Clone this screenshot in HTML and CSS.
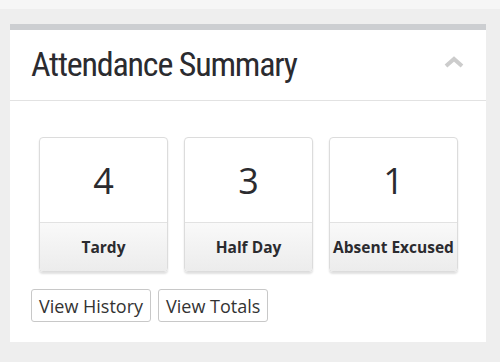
FILE: index.html
```html
<!DOCTYPE html>
<html lang="en">
<head>
    <meta charset="UTF-8">
    <meta name="viewport" content="width=device-width, initial-scale=1.0">
    <title>Attendance Summary</title>
    <link rel="stylesheet" href="styles.css">
</head>
<body>
    <div class="topbar"></div>
    <div class="page">
        <div class="panel">
            <div class="panel-header">
                <h2 class="panel-title">Attendance Summary</h2>
                <button class="collapse" aria-label="Collapse">
                    <svg width="20" height="12" viewBox="0 0 20 12">
                        <path d="M2 10 L10 3 L18 10" fill="none" stroke="#cccccc" stroke-width="4"/>
                    </svg>
                </button>
            </div>
            <div class="panel-body">
                <div class="stats">
                    <div class="stat">
                        <div class="stat-value">4</div>
                        <div class="stat-label">Tardy</div>
                    </div>
                    <div class="stat">
                        <div class="stat-value">3</div>
                        <div class="stat-label">Half Day</div>
                    </div>
                    <div class="stat">
                        <div class="stat-value">1</div>
                        <div class="stat-label">Absent Excused</div>
                    </div>
                </div>
                <div class="actions">
                    <button class="btn">View History</button>
                    <button class="btn">View Totals</button>
                </div>
            </div>
        </div>
    </div>
</body>
</html>
```

FILE: styles.css
```css
* {
    box-sizing: border-box;
    margin: 0;
    padding: 0;
}

body {
    font-family: 'Open Sans', sans-serif;
    background: #eeeeee;
    color: #333;
    width: 500px;
    height: 362px;
    overflow: hidden;
}

.topbar {
    height: 9px;
    background: #f6f6f6;
}

.page {
    padding: 15px 14px 0 10px;
}

.panel {
    background: #fff;
    border-top: 6px solid #ccced1;
}

.panel-header {
    height: 71px;
    display: flex;
    align-items: center;
    justify-content: space-between;
    padding: 0 22px 0 21px;
    border-bottom: 1px solid #e2e2e2;
}

.panel-title {
    font-family: 'Liberation Sans Narrow', 'Roboto Condensed', 'DejaVu Sans Condensed', sans-serif;
    font-weight: normal;
    font-size: 34px;
    color: #2b2b2f;
    letter-spacing: -1.2px;
    margin-top: -2px;
}

.collapse {
    background: none;
    border: none;
    display: flex;
    margin-top: -6px;
}

.panel-body {
    padding: 36px 20px 20px 21px;
}

.stats {
    display: flex;
    gap: 16px;
    padding-left: 8px;
}

.stat {
    width: 129px;
    border: 1px solid #dcdcdc;
    border-radius: 4px;
    box-shadow: 0 2px 2px rgba(0, 0, 0, 0.12);
    overflow: hidden;
}

.stat-value {
    height: 85px;
    display: flex;
    align-items: center;
    justify-content: center;
    font-family: 'Open Sans', sans-serif;
    font-weight: 400;
    font-size: 36px;
    color: #2b2b2f;
    border-bottom: 1px solid #e2e2e2;
}

.stat-label {
    height: 48px;
    display: flex;
    align-items: center;
    justify-content: center;
    font-weight: 700;
    font-size: 15.5px;
    color: #2b2b2f;
    background: linear-gradient(#f9f9f9, #ececec);
    white-space: nowrap;
}

.actions {
    display: flex;
    gap: 7px;
    margin-top: 17px;
}

.btn {
    font-family: 'Open Sans', sans-serif;
    font-size: 18px;
    color: #333;
    background: #fff;
    border: 1px solid #c8c8c8;
    border-radius: 3px;
    height: 33px;
    padding: 0 7px;
}
```
